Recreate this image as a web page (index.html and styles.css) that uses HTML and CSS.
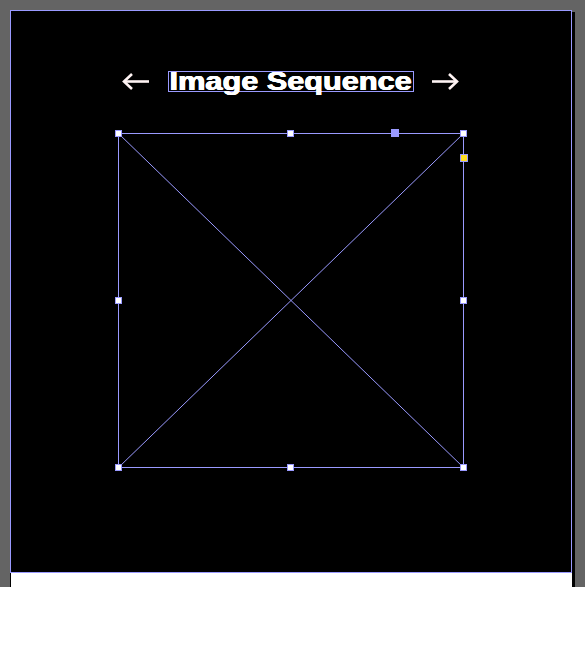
FILE: index.html
```
<!DOCTYPE html>
<html>
<head>
<meta charset="utf-8">
<link rel="stylesheet" href="styles.css">
</head>
<body>
<div class="screen">
  <div class="frame">
    <div class="stage">
      <svg class="canvas" width="560" height="561" viewBox="0 0 560 561">
        <g stroke="#fff4f4" stroke-width="2.6" fill="none" stroke-linecap="butt">
          <line x1="113" y1="70.5" x2="138" y2="70.5"/>
          <polyline points="121,63 113,70.5 121,78"/>
          <line x1="421" y1="70.5" x2="446" y2="70.5"/>
          <polyline points="438,63 446,70.5 438,78"/>
        </g>
        <g stroke="#9a9aff" stroke-width="1" fill="none">
          <rect x="107.5" y="122.5" width="345" height="334"/>
          <line x1="107.5" y1="122.5" x2="452.5" y2="456.5"/>
          <line x1="452.5" y1="122.5" x2="107.5" y2="456.5"/>
        </g>
        <g stroke="#9a9aff" stroke-width="1" fill="#fff">
          <rect x="104.5" y="119.5" width="6" height="6"/>
          <rect x="276.5" y="119.5" width="6" height="6"/>
          <rect x="449.5" y="119.5" width="6" height="6"/>
          <rect x="104.5" y="286.5" width="6" height="6"/>
          <rect x="449.5" y="286.5" width="6" height="6"/>
          <rect x="104.5" y="453.5" width="6" height="6"/>
          <rect x="276.5" y="453.5" width="6" height="6"/>
          <rect x="449.5" y="453.5" width="6" height="6"/>
        </g>
        <rect x="380" y="118" width="8" height="8" fill="#9a9aff"/>
        <rect x="449.5" y="143.5" width="7" height="7" fill="#ffdd22" stroke="#9a9aff" stroke-width="1"/>
      </svg>
      <div class="title"><span class="title-text">Image Sequence</span></div>
    </div>
    <div class="footer"></div>
  </div>
</div>
</body>
</html>
```
FILE: styles.css
```
html, body {
  margin: 0;
  padding: 0;
  background: #fff;
}
.screen {
  height: 587px;
  background: #646464;
  padding: 10px 0 0 10px;
  box-sizing: border-box;
}
.frame {
  width: 565px;
  display: flex;
  flex-direction: column;
}
.stage {
  position: relative;
  width: 560px;
  height: 561px;
  background: #000;
  border: 1px solid #9a9aff;
  box-shadow: 3px 2px 0 #000;
}
.canvas {
  position: absolute;
  left: 0;
  top: 0;
  display: block;
}
.footer {
  position: relative;
  width: 561px;
  height: 14px;
  background: #fff;
  border-left: 1px solid #000;
  border-right: 3px solid #000;
}
.title {
  position: absolute;
  left: 157px;
  top: 60px;
  width: 244px;
  height: 19px;
  border: 1px solid #9a9aff;
  color: #fff;
  font-family: "Liberation Sans", Arial, sans-serif;
  font-weight: bold;
  font-size: 26px;
  line-height: 19px;
  text-align: center;
  white-space: nowrap;
}
.title-text {
  display: inline-block;
  transform: scaleX(1.18);
  transform-origin: center;
  text-shadow: 0.5px 0 0 #fff, -0.4px 0 0 #fff, 0 0.3px 0 #fff;
}
```
